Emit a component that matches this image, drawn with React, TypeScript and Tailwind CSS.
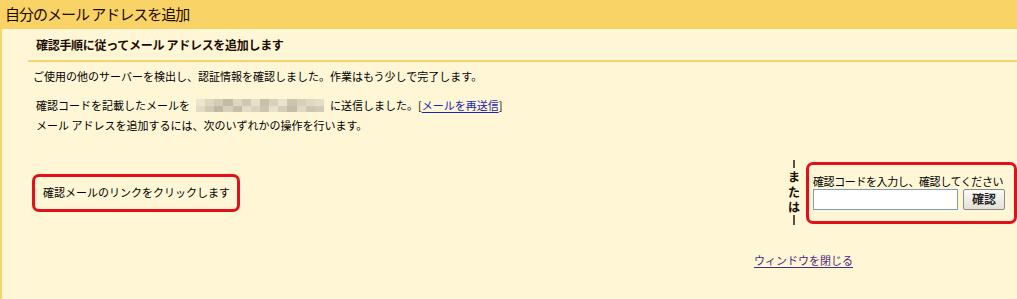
import React from 'react';

const font = { fontFamily: '"Noto Sans CJK JP", "Noto Sans", sans-serif' };

// モザイク部分（メールアドレスを隠している）
const blurTop = [
  'bg-[#ece6cf]', 'bg-[#ddd7c2]', 'bg-[#d3ccb7]', 'bg-[#c2bba6]', 'bg-[#ddd7c2]', 'bg-[#cfc8b3]', 'bg-[#e6e0c9]',
  'bg-[#c7c0ab]', 'bg-[#d8d2bc]', 'bg-[#e9e3cc]', 'bg-[#cbc4af]', 'bg-[#d6d0ba]', 'bg-[#dfd9c3]', 'bg-[#e4dec8]',
];
const blurBottom = [
  'bg-[#e2dcc6]', 'bg-[#d1cab5]', 'bg-[#bfb8a3]', 'bg-[#d6d0ba]', 'bg-[#c6bfaa]', 'bg-[#e3ddc7]', 'bg-[#d9d3bd]',
  'bg-[#ccc5b0]', 'bg-[#e7e1ca]', 'bg-[#d4cdb8]', 'bg-[#c3bca7]', 'bg-[#e0dac4]', 'bg-[#cdc6b1]', 'bg-[#d2cbb6]',
];

function BlurredEmail() {
  return (
    <span className="inline-flex flex-col align-middle mx-[6px] w-[128px] h-[13px] overflow-hidden">
      <span className="flex h-[7px]">
        {blurTop.map((c, i) => (
          <span key={i} className={`${c} w-[9.15px] h-full`} />
        ))}
      </span>
      <span className="flex h-[6px]">
        {blurBottom.map((c, i) => (
          <span key={i} className={`${c} w-[9.15px] h-full`} />
        ))}
      </span>
    </span>
  );
}

export default function App() {
  return (
    <main className="w-full h-[299px] bg-[#fff6d6] text-black overflow-hidden" style={font}>
      {/* タイトル */}
      <div className="h-[29px] bg-[#fad366] flex items-center pl-[5px] text-[15px] tracking-[-1px] text-[#1a0c00]">
        自分のメール アドレスを追加
      </div>

      <div className="border-l-2 border-[#f7d36e] h-[270px]">
        {/* サブタイトル */}
        <div className="h-[31px] flex items-center pl-[34px] text-[12px] font-bold tracking-[-0.3px] text-[#1a0c00]">
          確認手順に従ってメール アドレスを追加します
        </div>
        <div className="ml-[26px] h-[2px] bg-[#f7d36e]" />

        <p className="pl-[31px] pt-[6px] text-[11px] leading-[16px]">
          ご使用の他のサーバーを検出し、認証情報を確認しました。作業はもう少しで完了します。
        </p>

        <div className="pl-[34px] mt-[11px] text-[11px] leading-[20px]">
          <div className="flex items-center">
            確認コードを記載したメールを
            <BlurredEmail />
            に送信しました。[
            <a href="#" className="text-[#1a22b8] underline underline-offset-2">メールを再送信</a>]
          </div>
          <div>メール アドレスを追加するには、次のいずれかの操作を行います。</div>
        </div>

        {/* 操作の選択 */}
        <div className="mt-[25px] flex items-center justify-between">
          <div className="ml-[30px] w-[208px] h-[38px] border-[3px] border-[#e3101a] rounded-[7px] flex items-center pl-[8px] text-[11px]">
            確認メールのリンクをクリックします
          </div>

          <div className="flex items-center">
            <div className="w-[20px] flex flex-col items-center mr-[2px]">
              <span className="w-[2px] h-[8px] bg-[#5a5148]" />
              <span className="flex flex-col items-center text-[12px] font-bold leading-[15px] py-[1px] text-[#1a0c00]">
                <span className="block h-[15px]">ま</span>
                <span className="block h-[15px]">た</span>
                <span className="block h-[15px]">は</span>
              </span>
              <span className="w-[2px] h-[10px] bg-[#5a5148]" />
            </div>

            <div className="w-[211px] h-[62px] border-[3px] border-[#e3101a] rounded-[7px] pl-[4px] pt-[9px]">
              <div className="text-[11px] leading-[14px] tracking-[-0.4px] whitespace-nowrap">
                確認コードを入力し、確認してください
              </div>
              <div className="flex items-center mt-[1px]">
                <input
                  type="text"
                  className="w-[145px] h-[21px] bg-white border border-[#7f9db9] outline-none"
                />
                <button
                  type="button"
                  className="ml-[5px] w-[42px] h-[21px] border border-[#8a8a8a] rounded-[2px] bg-gradient-to-b from-[#fbfbf8] to-[#e3e0d6] text-[12px] font-bold leading-none text-[#222]"
                >
                  確認
                </button>
              </div>
            </div>
          </div>
        </div>

        <div className="mt-[27px] flex justify-end pr-[164px]">
          <a href="#" className="text-[11px] text-[#4b2a7e] underline underline-offset-2">
            ウィンドウを閉じる
          </a>
        </div>
      </div>
    </main>
  );
}
